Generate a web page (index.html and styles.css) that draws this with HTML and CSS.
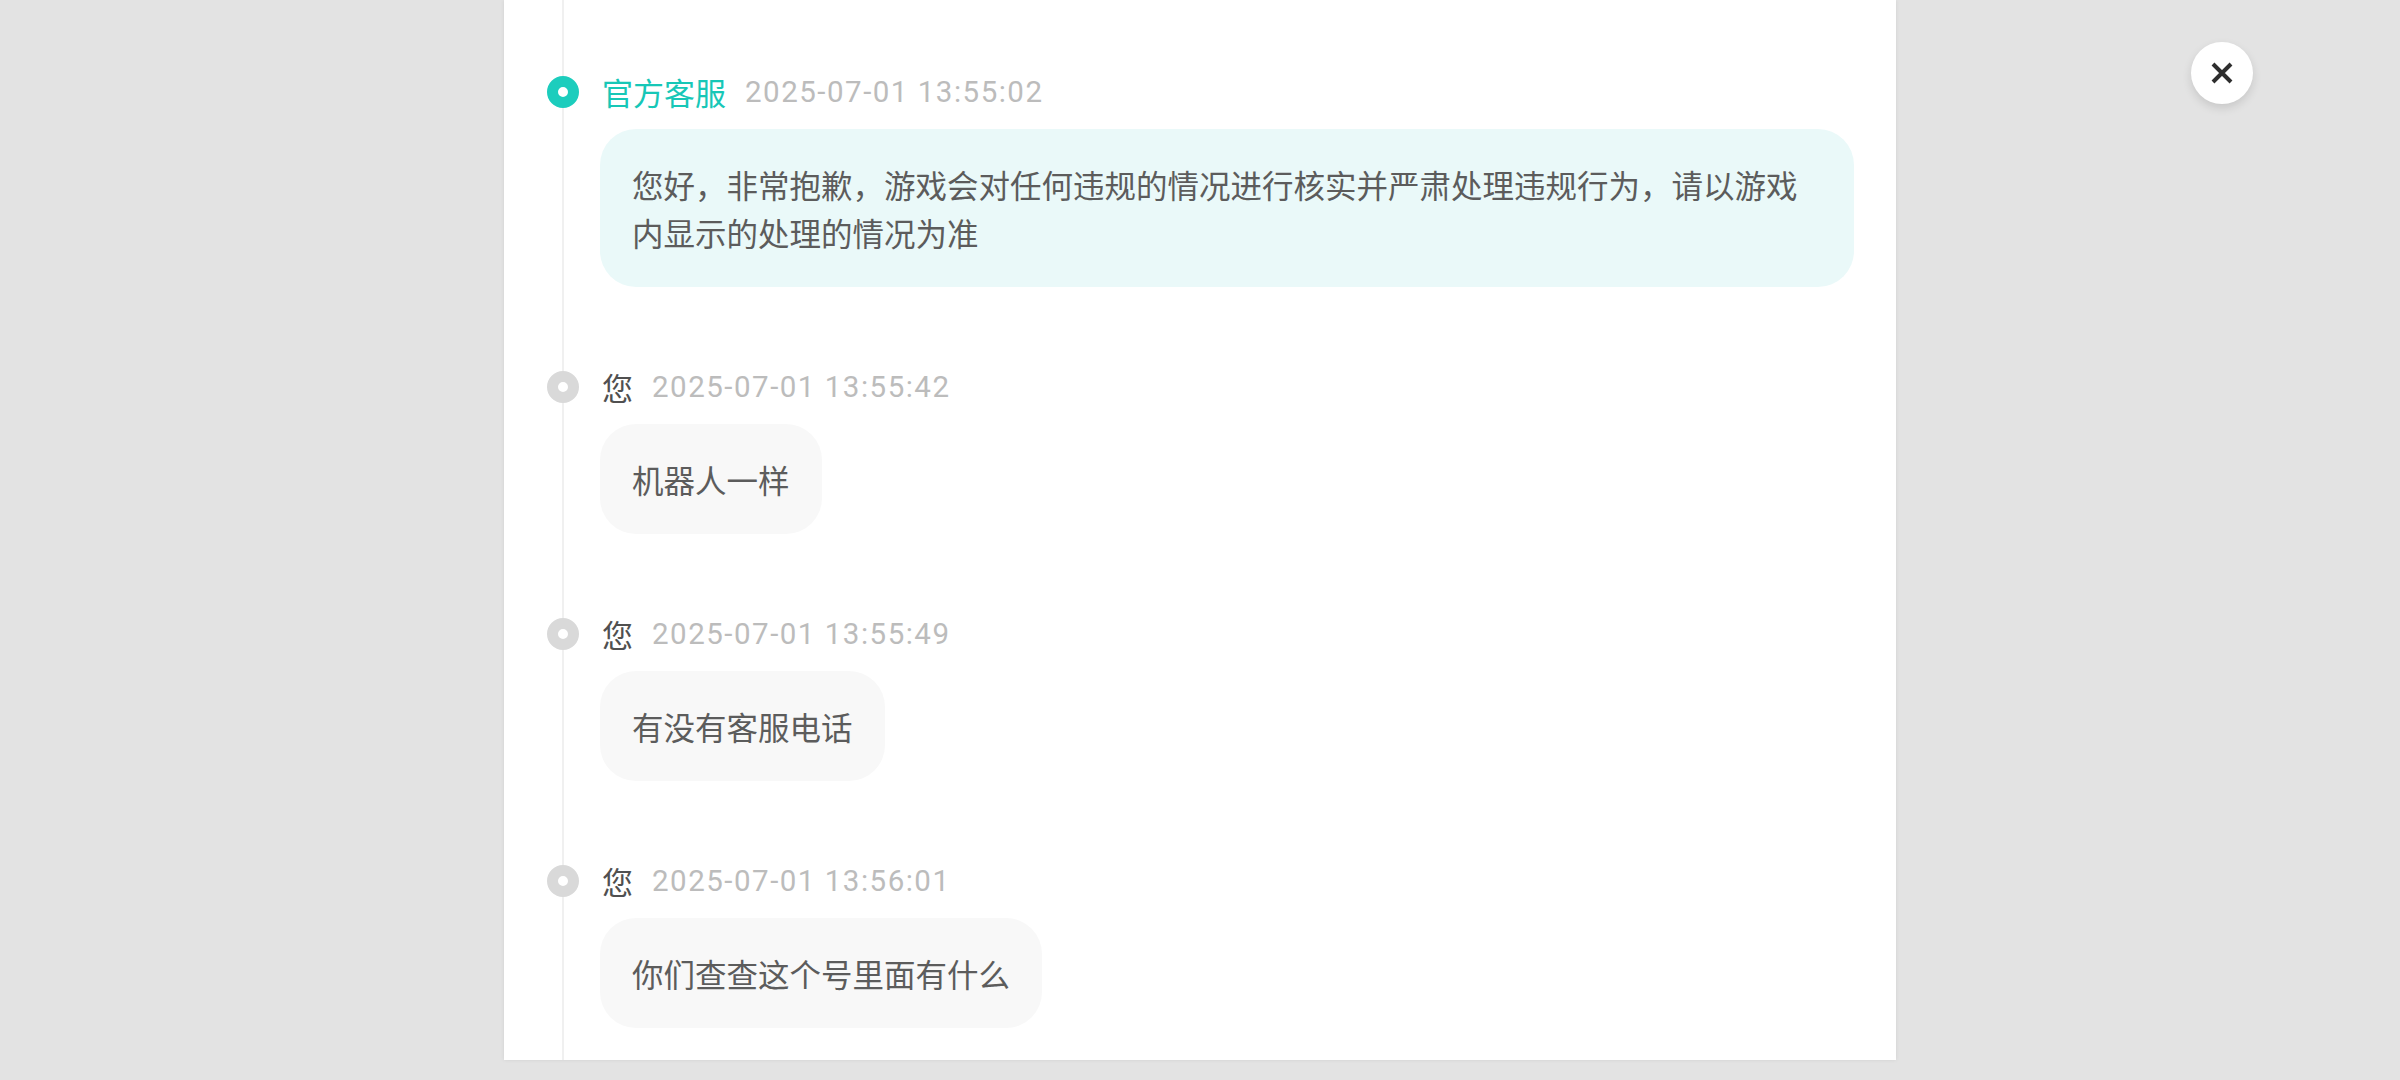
FILE: index.html
```html
<!DOCTYPE html>
<html lang="zh-CN">
<head>
<meta charset="utf-8">
<title>客服记录</title>
<link rel="stylesheet" href="styles.css">
</head>
<body>
<main class="panel">
  <div class="timeline">
    <section class="item">
      <div class="meta">
        <span class="dot dot-staff"></span>
        <span class="name name-staff">官方客服</span>
        <span class="time">2025-07-01 13:55:02</span>
      </div>
      <div class="bubble bubble-staff">您好，非常抱歉，游戏会对任何违规的情况进行核实并严肃处理违规行为，请以游戏内显示的处理的情况为准</div>
    </section>
    <section class="item">
      <div class="meta">
        <span class="dot"></span>
        <span class="name">您</span>
        <span class="time">2025-07-01 13:55:42</span>
      </div>
      <div class="bubble">机器人一样</div>
    </section>
    <section class="item">
      <div class="meta">
        <span class="dot"></span>
        <span class="name">您</span>
        <span class="time">2025-07-01 13:55:49</span>
      </div>
      <div class="bubble">有没有客服电话</div>
    </section>
    <section class="item">
      <div class="meta">
        <span class="dot"></span>
        <span class="name">您</span>
        <span class="time">2025-07-01 13:56:01</span>
      </div>
      <div class="bubble">你们查查这个号里面有什么</div>
    </section>
  </div>
</main>
<button class="close" aria-label="关闭">
  <svg viewBox="0 0 24 24" width="24" height="24"><path d="M3 3 L21 21 M21 3 L3 21" stroke="#2e2e2e" stroke-width="4" stroke-linecap="butt" fill="none"/></svg>
</button>
</body>
</html>
```

FILE: styles.css
```css
* { box-sizing: border-box; }

html, body {
  margin: 0;
  padding: 0;
  height: 100%;
}

body {
  background: #e3e3e3;
  font-family: "Noto Sans CJK SC", "Noto Sans", sans-serif;
  overflow: hidden;
}

.panel {
  width: 1392px;
  height: 1060px;
  margin: 0 auto;
  background: #ffffff;
  box-shadow: 0 0 4px rgba(0, 0, 0, 0.08);
  padding: 0 42px 0 0;
}

.timeline {
  margin-left: 58px;
  border-left: 2px solid #f0f0f0;
  height: 100%;
  padding-top: 72px;
}

.item {
  padding-left: 36px;
  margin-bottom: 80px;
}

.meta {
  display: flex;
  align-items: center;
  height: 40px;
}

.dot {
  flex: none;
  width: 32px;
  height: 32px;
  border-radius: 50%;
  margin-left: -53px;
  border: 11px solid #d9d9d9;
  background: #ffffff;
}

.dot-staff {
  border-color: #1ccdbd;
}

.name {
  margin-left: 23px;
  font-size: 31px;
  color: #505050;
  line-height: 40px;
}

.name-staff {
  color: #17c7b7;
}

.time {
  margin-left: 19px;
  font-family: Roboto, "Liberation Sans", sans-serif;
  font-size: 29.5px;
  letter-spacing: 1.5px;
  color: #bcbcbc;
  line-height: 40px;
}

.bubble {
  margin-top: 17px;
  width: fit-content;
  max-width: 100%;
  padding: 31px 32px;
  font-size: 31.5px;
  line-height: 48px;
  color: #5c5c5c;
  background: #f8f8f8;
  border-radius: 36px;
}

.bubble-staff {
  background: #eaf9f9;
}

.close {
  position: fixed;
  left: 2191px;
  top: 42px;
  width: 62px;
  height: 62px;
  border-radius: 50%;
  border: none;
  background: #ffffff;
  box-shadow: 0 4px 10px rgba(0, 0, 0, 0.12);
  display: flex;
  align-items: center;
  justify-content: center;
  padding: 0;
}
```
